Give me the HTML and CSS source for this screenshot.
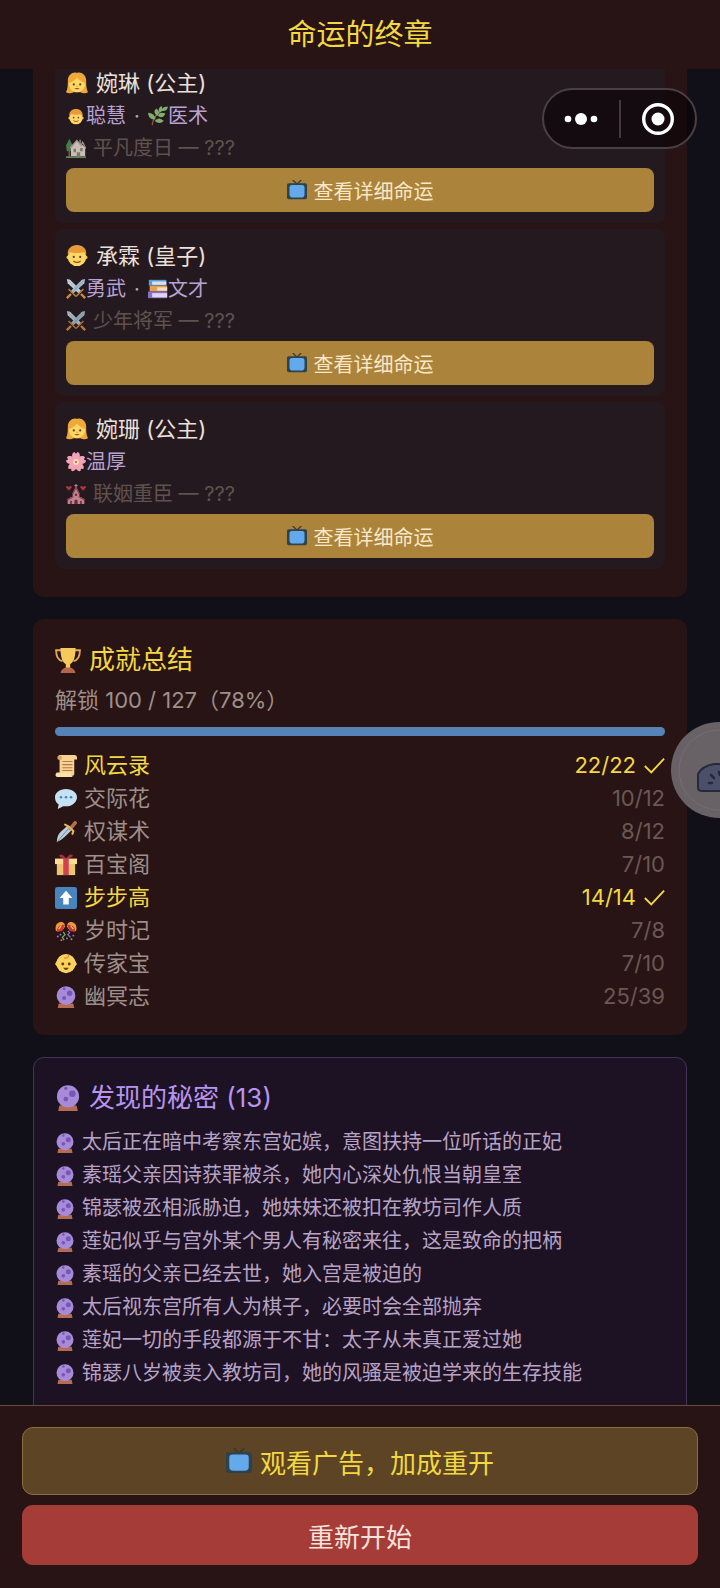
FILE: index.html
```
<!DOCTYPE html>
<html lang="zh-CN">
<head>
    <meta charset="UTF-8">
    <meta name="viewport" content="width=device-width, initial-scale=1.0">
    <title>命运的终章</title>
    <link rel="stylesheet" href="styles.css">
</head>
<body>
    <!-- icon sprite -->
    <svg class="sprite" aria-hidden="true">
        <symbol id="i-girl" viewBox="0 0 24 24">
            <path d="M12 1C8-1 2 3 2 9c0 5 0 9-2 13 3 2 6 1 8 0h8c2 1 5 2 8 0-2-4-2-8-2-13C22 3 16-1 12 1z" fill="#efa83a"/>
            <path d="M3 12c3-1 7-3 9-6 2 3 6 5 9 6 0 6-4 10-9 10s-9-4-9-10z" fill="#ffd765"/>
            <circle cx="8.500" cy="13.500" r="1.200" fill="#5c3d25"/><circle cx="15.500" cy="13.500" r="1.200" fill="#5c3d25"/>
            <path d="M9 17.500h6q-3 3-6 0z" fill="#b84b3a"/><path d="M11.300 15.500h1.500" stroke="#d9922f"/>
        </symbol>
        <symbol id="i-boy" viewBox="0 0 24 24">
            <circle cx="2.500" cy="13.500" r="2" fill="#efb94b"/><circle cx="21.500" cy="13.500" r="2" fill="#efb94b"/>
            <circle cx="12" cy="13" r="10" fill="#ffd765"/>
            <path d="M2 11C1 4 6 0 12 0s11 4 10 11l-2-3c-4 1-12 1-16 0z" fill="#e99b3b"/>
            <circle cx="8.500" cy="13" r="1.200" fill="#5c3d25"/><circle cx="15.500" cy="13" r="1.200" fill="#5c3d25"/>
            <path d="M8 17.500q4 3 8 0" stroke="#8a5426" stroke-width="1.300" fill="none"/>
        </symbol>
        <symbol id="i-herb" viewBox="0 0 24 24">
            <path d="M5 23C6 14 11 8 19 4" stroke="#9a5540" stroke-width="1.500" fill="none"/>
            <g fill="#7faf6c">
                <path d="M24 1q-7-1-8 5 7 1 8-5z"/><path d="M16 0q-5 3-2 8 5-3 2-8z"/><path d="M10 3q-5 4 1 9 5-5-1-9z"/>
                <path d="M0 8q1 9 9 8-1-8-9-8z"/><path d="M21 9q-8-3-9 3 6 4 9-3z"/><path d="M19 18q-6-6-11 0 6 5 11 0z"/>
            </g>
        </symbol>
        <symbol id="i-house" viewBox="0 0 24 24">
            <path d="M4 1L0 9l1 7h6l1-7z" fill="#4d8d58"/><path d="M3 14h2v9H3z" fill="#8a6344"/>
            <path d="M6 12l7-9 10 8v11H6z" fill="#e2dccf"/><path d="M5 12l8-9 5 6 2-4 4 8" stroke="#b9ada0" stroke-width="1.500" fill="none"/>
            <path d="M9 13h3v4H9zM17 12h3v4h-3zM13 17h4v6h-4z" fill="#94857c"/><path d="M16 2h2v4h-2z" fill="#8d8790"/>
            <path d="M0 22h24v2H0z" fill="#6f9b63"/>
        </symbol>
        <symbol id="i-swords" viewBox="0 0 24 24">
            <path d="M1 0l4 1 13 13-3 3L2 5z" fill="#c3d3dc"/><path d="M23 0l-4 1L6 14l3 3L22 5z" fill="#a5bdc9"/>
            <path d="M3 2l13 14M21 2L8 16" stroke="#6f8896" stroke-width=".5"/>
            <path d="M3 12l9 9M21 12l-9 9" stroke="#b9793f" stroke-width="2"/>
            <path d="M6 18l-5 5M18 18l5 5" stroke="#d48a43" stroke-width="2.800"/>
        </symbol>
        <symbol id="i-books" viewBox="0 0 24 24">
            <path d="M1 1h21v7H1z" fill="#5e9bd8"/><path d="M5 3h17v4H5z" fill="#d9e2ea"/>
            <path d="M2 8h21v7H2z" fill="#e6a052"/><path d="M11 10h12v4H11z" fill="#f1dfca"/>
            <path d="M0 15h23v8H0z" fill="#8a70c4"/><path d="M5 17h18v5H5z" fill="#ded9ea"/>
        </symbol>
        <symbol id="i-blossom" viewBox="0 0 24 24">
            <g fill="#f2a3b5">
                <path id="petal" d="M12 12C5 7 7 1 10 0l2 2 2-2c3 1 5 7-2 12z"/>
                <use href="#petal" transform="rotate(72 12 12)"/><use href="#petal" transform="rotate(144 12 12)"/>
                <use href="#petal" transform="rotate(216 12 12)"/><use href="#petal" transform="rotate(288 12 12)"/>
            </g>
            <circle cx="12" cy="12" r="3.500" fill="#f8dfb2"/><circle cx="12" cy="12" r="1.300" fill="#c9546f"/>
        </symbol>
        <symbol id="i-chapel" viewBox="0 0 24 24">
            <path d="M12 0v5M10 2h4" stroke="#b9b0bb" stroke-width="1.200"/>
            <path d="M12 4l4 7v4l6 3v6H2v-6l6-3v-4z" fill="#d99aa8"/><path d="M12 4l-4 8M12 4l4 8M2 19l7-4M22 19l-7-4" stroke="#b0465a" stroke-width="1.600"/>
            <path d="M10 24v-4q2-3 4 0v4zM5 20h2v4H5zM17 20h2v4h-2z" fill="#7d2f42"/><circle cx="12" cy="13" r="1.500" fill="#7d2f42"/>
            <path d="M3.500 8L0 4q1-3 3.500 0Q6 1 7 4zM20.500 8L17 4q1-3 3.500 0Q23 1 24 4z" fill="#cf3d4e"/>
        </symbol>
        <symbol id="i-tv" viewBox="0 0 24 24">
            <path d="M7 0l5 5 5-5" stroke="#3f372f" stroke-width="1.600" fill="none"/>
            <rect x="0" y="4" width="24" height="19" rx="2" fill="#2e424c"/>
            <path d="M6 6h12q3 0 3 3v8q0 4-4 4H7q-4 0-4-4V9q0-3 3-3z" fill="#65a9ed"/>
        </symbol>
        <symbol id="i-trophy" viewBox="0 0 24 24">
            <path d="M6 3H1q0 9 6 10M18 3h5q0 9-6 10" fill="none" stroke="#e5a653" stroke-width="1.700"/>
            <path d="M5 1h14c0 9-2 13-5 15v4h-4v-4C7 14 5 10 5 1z" fill="#f5c95b"/><path d="M5 24q1-4 5-5h4q4 1 5 5z" fill="#b5654d"/>
        </symbol>
        <symbol id="i-scroll" viewBox="0 0 24 24">
            <path d="M4 0h17q3 0 3 3v2h-3v16q0 2-3 2H5V3z" fill="#f5d390"/><circle cx="5" cy="3" r="2.500" fill="#dca267"/>
            <path d="M2 19h15q0 4 3 5H2q-3-2 0-5z" fill="#fbe0a9"/><path d="M8 7h11M8 10.500h11M8 14h11M8 17h11" stroke="#bd7651" stroke-width="1.100"/>
        </symbol>
        <symbol id="i-speech" viewBox="0 0 24 24">
            <path d="M12 1c7 0 12 4 12 9s-5 10-12 10l-3 0-6 3 1-5C1 16 0 13 0 10c0-5 5-9 12-9z" fill="#c5e2f5"/>
            <g fill="#4485b5"><circle cx="6.500" cy="10" r="1.400"/><circle cx="12" cy="10" r="1.400"/><circle cx="17.500" cy="10" r="1.400"/></g>
        </symbol>
        <symbol id="i-dagger" viewBox="0 0 24 24">
            <path d="M2 23q0-7 4-11l8-7 4 5-7 7q-4 4-9 6z" fill="#b9d0db"/><path d="M2 23L15 8" stroke="#6d8997"/>
            <path d="M17 8l5-6" stroke="#b76d4f" stroke-width="4" stroke-linecap="round"/>
            <path d="M11 4l4 2 5 5-1 3" stroke="#eab54d" stroke-width="2.300" fill="none" stroke-linecap="round"/>
        </symbol>
        <symbol id="i-gift" viewBox="0 0 24 24">
            <path d="M2 10h20v13H2z" fill="#efc274"/><path d="M0 5h24v6H0z" fill="#ffdc94"/>
            <path d="M9 5h6v18H9z" fill="#d2414f"/><path d="M12 5Q8-1 5 1q-2 3 7 4zM12 5q4-6 7-4 2 3-7 4z" fill="#a92e3d"/>
        </symbol>
        <symbol id="i-up" viewBox="0 0 24 24">
            <rect width="24" height="24" rx="2.500" fill="#4884be"/><path d="M12 4l7 8h-4v7H9v-7H5z" fill="#fff"/>
        </symbol>
        <symbol id="i-confetti" viewBox="0 0 24 24">
            <path d="M1 12Q-1 3 7 2q4 1 4 5-2 5-10 5z" fill="#ee9a3b"/><path d="M23 12q2-9-6-10-4 1-4 5 2 5 10 5z" fill="#ee9a3b"/>
            <path d="M2 13q0-8 9-8l-3 7zM22 13q0-8-9-8l3 7z" fill="#c93b33"/><path d="M4 10l3-4M20 10l-3-4" stroke="#f8d476" stroke-width="1.200"/>
            <path d="M9 13l2 3-3 3 2 3" stroke="#79b653" stroke-width="1.300" fill="none"/>
            <path d="M14 12l2 2-2 2 3 3" stroke="#8f6ed1" stroke-width="1.300" fill="none"/>
            <g fill="#5c9ee0"><circle cx="6" cy="16" r="1"/><circle cx="20" cy="17" r="1"/><circle cx="13" cy="20" r="1"/></g>
            <g fill="#e46e9a"><circle cx="3" cy="18" r="1"/><circle cx="18" cy="21" r="1"/><circle cx="7" cy="22" r="1"/></g>
        </symbol>
        <symbol id="i-baby" viewBox="0 0 24 24">
            <circle cx="12" cy="11.500" r="10.500" fill="#fbd25c"/><path d="M3 7l-3 5 5 6zM21 7l3 5-5 6z" fill="#fbd25c"/>
            <path d="M15 2q-1 5-5 3" stroke="#d98d38" stroke-width="1.400" fill="none"/>
            <circle cx="8.500" cy="12" r="1.600" fill="#5c3b26"/><circle cx="15.500" cy="12" r="1.600" fill="#5c3b26"/>
            <path d="M9 16h6q-3 5-6 0z" fill="#5c3b26"/>
        </symbol>
        <symbol id="i-crystal" viewBox="0 0 24 24">
            <path d="M3 24l1-5h16l1 5z" fill="#b66c50"/><circle cx="12" cy="10.500" r="10.200" fill="#a78ad8"/>
            <g fill="#7657b5"><circle cx="16" cy="8" r="3"/><circle cx="10" cy="13" r="2.200"/><circle cx="10" cy="3" r="1.500"/></g>
        </symbol>
        <symbol id="i-check" viewBox="0 0 24 24">
            <path d="M2 12l7 7L23 4" fill="none" stroke="currentColor" stroke-width="2"/>
        </symbol>
    </svg>

    <header class="header">
        <h1>命运的终章</h1>
    </header>

    <div class="capsule">
        <button class="capsule-btn" aria-label="更多">
            <svg width="34" height="14" viewBox="0 0 34 14" fill="#fff"><circle cx="4" cy="7" r="3.300"/><circle cx="17" cy="7" r="6"/><circle cx="30" cy="7" r="3.300"/></svg>
        </button>
        <button class="capsule-btn" aria-label="关闭">
            <svg width="32" height="32" viewBox="0 0 32 32"><circle cx="16" cy="16" r="14.300" fill="none" stroke="#fff" stroke-width="3.400"/><circle cx="16" cy="16" r="6.500" fill="#fff"/></svg>
        </button>
    </div>

    <button class="float-ball" aria-label="悬浮球">
        <svg width="96" height="96" viewBox="0 0 96 96">
            <circle cx="48" cy="48" r="40" fill="none" stroke="#746d71"/>
            <path d="M27 66V52q4-8 16-10 18-1 26 8v16q-3 3-8 3H32q-5 0-5-3z" fill="#4b506a" stroke="#252a3a" stroke-width="2"/>
            <path d="M40 53l3 3M48 50l1 3M38 61h3" stroke="#252a3a" stroke-width="2.500" stroke-linecap="round"/>
        </svg>
    </button>

    <main class="content">
        <section class="panel">
            <div class="child">
                <h3 class="child-name"><svg class="icon"><use href="#i-girl"/></svg>婉琳 (公主)</h3>
                <p class="traits">
                    <svg class="icon icon-small"><use href="#i-boy"/></svg><span>聪慧</span>
                    <span class="dot">·</span>
                    <svg class="icon"><use href="#i-herb"/></svg><span>医术</span>
                </p>
                <p class="fate"><svg class="icon"><use href="#i-house"/></svg>平凡度日 — ???</p>
                <button class="btn-fate"><svg class="icon"><use href="#i-tv"/></svg>查看详细命运</button>
            </div>
            <div class="child">
                <h3 class="child-name"><svg class="icon"><use href="#i-boy"/></svg>承霖 (皇子)</h3>
                <p class="traits">
                    <svg class="icon"><use href="#i-swords"/></svg><span>勇武</span>
                    <span class="dot">·</span>
                    <svg class="icon"><use href="#i-books"/></svg><span>文才</span>
                </p>
                <p class="fate"><svg class="icon"><use href="#i-swords"/></svg>少年将军 — ???</p>
                <button class="btn-fate"><svg class="icon"><use href="#i-tv"/></svg>查看详细命运</button>
            </div>
            <div class="child">
                <h3 class="child-name"><svg class="icon"><use href="#i-girl"/></svg>婉珊 (公主)</h3>
                <p class="traits">
                    <svg class="icon"><use href="#i-blossom"/></svg><span>温厚</span>
                </p>
                <p class="fate"><svg class="icon"><use href="#i-chapel"/></svg>联姻重臣 — ???</p>
                <button class="btn-fate"><svg class="icon"><use href="#i-tv"/></svg>查看详细命运</button>
            </div>
        </section>

        <section class="panel">
            <h2 class="panel-title"><svg class="icon"><use href="#i-trophy"/></svg>成就总结</h2>
            <p class="unlocked">解锁 100 / 127（78%）</p>
            <div class="progress"></div>
            <ul class="achievements">
                <li class="done"><span class="label"><svg class="icon"><use href="#i-scroll"/></svg>风云录</span><span class="count">22/22<svg class="icon"><use href="#i-check"/></svg></span></li>
                <li><span class="label"><svg class="icon"><use href="#i-speech"/></svg>交际花</span><span class="count">10/12</span></li>
                <li><span class="label"><svg class="icon"><use href="#i-dagger"/></svg>权谋术</span><span class="count">8/12</span></li>
                <li><span class="label"><svg class="icon"><use href="#i-gift"/></svg>百宝阁</span><span class="count">7/10</span></li>
                <li class="done"><span class="label"><svg class="icon"><use href="#i-up"/></svg>步步高</span><span class="count">14/14<svg class="icon"><use href="#i-check"/></svg></span></li>
                <li><span class="label"><svg class="icon"><use href="#i-confetti"/></svg>岁时记</span><span class="count">7/8</span></li>
                <li><span class="label"><svg class="icon"><use href="#i-baby"/></svg>传家宝</span><span class="count">7/10</span></li>
                <li><span class="label"><svg class="icon"><use href="#i-crystal"/></svg>幽冥志</span><span class="count">25/39</span></li>
            </ul>
        </section>

        <section class="panel panel-secret">
            <h2 class="panel-title"><svg class="icon"><use href="#i-crystal"/></svg>发现的秘密 (13)</h2>
            <ul class="secrets">
                <li><svg class="icon"><use href="#i-crystal"/></svg>太后正在暗中考察东宫妃嫔，意图扶持一位听话的正妃</li>
                <li><svg class="icon"><use href="#i-crystal"/></svg>素瑶父亲因诗获罪被杀，她内心深处仇恨当朝皇室</li>
                <li><svg class="icon"><use href="#i-crystal"/></svg>锦瑟被丞相派胁迫，她妹妹还被扣在教坊司作人质</li>
                <li><svg class="icon"><use href="#i-crystal"/></svg>莲妃似乎与宫外某个男人有秘密来往，这是致命的把柄</li>
                <li><svg class="icon"><use href="#i-crystal"/></svg>素瑶的父亲已经去世，她入宫是被迫的</li>
                <li><svg class="icon"><use href="#i-crystal"/></svg>太后视东宫所有人为棋子，必要时会全部抛弃</li>
                <li><svg class="icon"><use href="#i-crystal"/></svg>莲妃一切的手段都源于不甘：太子从未真正爱过她</li>
                <li><svg class="icon"><use href="#i-crystal"/></svg>锦瑟八岁被卖入教坊司，她的风骚是被迫学来的生存技能</li>
            </ul>
        </section>
    </main>

    <footer class="footer">
        <button class="btn-ad"><svg class="icon"><use href="#i-tv"/></svg>观看广告，加成重开</button>
        <button class="btn-restart">重新开始</button>
    </footer>
</body>
</html>
```

FILE: styles.css
```
* {
    box-sizing: border-box;
}
body {
    margin: 0;
    height: 100vh;
    overflow: hidden;
    font-family: Inter, "Noto Sans CJK SC", sans-serif;
    background-color: #110f18;
    color: #ece0d8;
}
h1, h2, h3, p, ul {
    margin: 0;
    padding: 0;
    font-weight: normal;
}
ul {
    list-style: none;
}
button {
    font-family: inherit;
    border: none;
    cursor: pointer;
}
.sprite {
    position: absolute;
    width: 0;
    height: 0;
}
.icon {
    width: 1em;
    height: 1em;
    flex: none;
}

/* top bar */
.header {
    position: fixed;
    top: 0;
    left: 0;
    right: 0;
    z-index: 2;
    height: 69px;
    display: flex;
    align-items: center;
    justify-content: center;
    background-color: #281415;
}
.header h1 {
    font-size: 29px;
    line-height: 40px;
    color: #f3d93f;
}
.capsule {
    position: fixed;
    top: 88px;
    right: 23px;
    z-index: 3;
    display: flex;
    align-items: center;
    width: 155px;
    height: 61px;
    border: 2px solid #4a4043;
    border-radius: 31px;
    background-color: rgba(8, 0, 5, 0.55);
}
.capsule-btn {
    flex: 1;
    height: 38px;
    padding: 0;
    display: flex;
    align-items: center;
    justify-content: center;
    background: none;
}
.capsule-btn + .capsule-btn {
    border-left: 2px solid #443a3d;
}
.float-ball {
    position: fixed;
    top: 722px;
    right: -47px;
    z-index: 3;
    width: 96px;
    height: 96px;
    padding: 0;
    border-radius: 50%;
    background-color: #686266;
}
.float-ball svg {
    display: block;
}

/* scrolling area */
.content {
    height: 100vh;
    overflow-y: auto;
    scrollbar-width: none;
    padding: 34px 33px 205px;
    display: flex;
    flex-direction: column;
    gap: 22px;
}
.panel {
    flex: none;
    padding: 22px;
    border-radius: 11px;
    background-color: #281415;
}
.panel-title {
    display: flex;
    align-items: center;
    gap: 8px;
    font-size: 26px;
    line-height: 38px;
    margin-bottom: 5px;
    color: #f3d93f;
}

/* children */
.child {
    padding: 11px;
    margin-bottom: 6px;
    border-radius: 8px;
    background-color: #251920;
}
.child-name {
    display: flex;
    align-items: center;
    gap: 8px;
    font-size: 22px;
    line-height: 32px;
}
.traits {
    display: flex;
    align-items: center;
    font-size: 20px;
    line-height: 34px;
    color: #b8a2d4;
}
.traits .icon-small {
    padding: 3px 2px 1px;
}
.dot {
    width: 22px;
    text-align: center;
}
.fate {
    display: flex;
    align-items: center;
    gap: 7px;
    font-size: 20px;
    line-height: 30px;
    color: #5f524c;
}
.fate .icon {
    opacity: 0.85;
}
.btn-fate {
    display: flex;
    align-items: center;
    justify-content: center;
    gap: 7px;
    width: 100%;
    height: 44px;
    margin-top: 5px;
    border-radius: 8px;
    font-size: 20px;
    color: #fae8c8;
    background-color: #ab833b;
}

/* achievements */
.unlocked {
    font-size: 22px;
    line-height: 32px;
    color: #9f8f89;
}
.progress {
    height: 9px;
    margin: 11px 0 13px;
    border-radius: 5px;
    background-color: #5782b5;
}
.achievements li {
    display: flex;
    justify-content: space-between;
    font-size: 22px;
    line-height: 33px;
    color: #9f8f89;
}
.label, .count {
    display: flex;
    align-items: center;
    gap: 7px;
}
.count {
    color: #6b5753;
}
.achievements .done, .done .count {
    color: #f3d93f;
}

/* secrets */
.panel-secret {
    padding: 21px 21px 44px;
    border: 1px solid #44345c;
    background-color: #1d1224;
}
.panel-secret .panel-title {
    margin-bottom: 9px;
    color: #b794f0;
}
.secrets li {
    display: flex;
    align-items: center;
    gap: 7px;
    font-size: 20px;
    line-height: 33px;
    color: #b8a3c6;
}

/* bottom bar */
.footer {
    position: fixed;
    left: 0;
    right: 0;
    bottom: 0;
    z-index: 2;
    display: flex;
    flex-direction: column;
    gap: 10px;
    padding: 21px 22px 23px;
    border-top: 1px solid #6b4d37;
    background-color: #281415;
}
.btn-ad, .btn-restart {
    display: flex;
    align-items: center;
    justify-content: center;
    gap: 8px;
    border-radius: 11px;
    font-size: 26px;
}
.btn-ad {
    height: 68px;
    border: 1px solid #8a6f3e;
    color: #f3d93f;
    background-color: #5c4424;
}
.btn-restart {
    height: 60px;
    color: #f5e3dc;
    background-color: #a63c38;
}
```
